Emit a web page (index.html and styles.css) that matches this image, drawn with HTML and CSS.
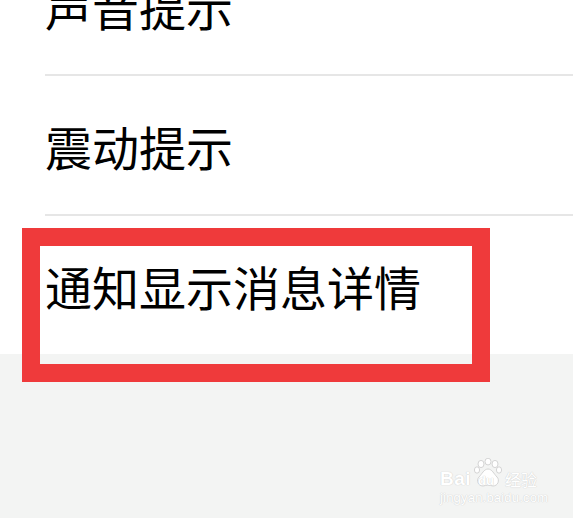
FILE: index.html
```html
<!DOCTYPE html>
<html lang="zh-CN">
<head>
    <meta charset="UTF-8">
    <meta name="viewport" content="width=device-width, initial-scale=1.0">
    <title>新消息通知</title>
    <link rel="stylesheet" href="styles.css">
</head>
<body>
    <main class="settings">
        <div class="item">声音提示</div>
        <div class="item">震动提示</div>
        <div class="item">通知显示消息详情</div>
    </main>

    <!-- 标注框 -->
    <div class="highlight"></div>

    <div class="watermark">
        <div class="wm-logo">
            <span class="wm-bai">Bai</span>
            <span class="wm-paw">
                <svg width="30" height="30" viewBox="0 0 30 30">
                    <ellipse cx="8" cy="6" rx="3" ry="3.6"/>
                    <ellipse cx="15" cy="3.6" rx="3" ry="3.4"/>
                    <ellipse cx="22" cy="6" rx="3" ry="3.6"/>
                    <ellipse cx="26" cy="12" rx="2.6" ry="3.2"/>
                    <ellipse cx="4" cy="12" rx="2.6" ry="3.2"/>
                    <path d="M15 11c-4 0-6 5-9 8-3 3-1 9 4 9 2 0 3-1 5-1s3 1 5 1c5 0 7-6 4-9-3-3-5-8-9-8z"/>
                </svg>
                <span class="wm-du">du</span>
            </span>
            <span class="wm-jy">经验</span>
        </div>
        <div class="wm-url">jingyan.baidu.com</div>
    </div>
</body>
</html>
```

FILE: styles.css
```css
body {
    margin: 0;
    padding: 0;
    background-color: #f3f4f3;
    font-family: "Noto Sans CJK SC", "Noto Sans", sans-serif;
    color: #000;
    overflow: hidden;
}

.settings {
    margin-top: -64px;
    background-color: #fff;
}

.item {
    height: 138px;
    margin-left: 45px;
    display: flex;
    align-items: center;
    font-size: 47px;
    line-height: 1;
    border-bottom: 2px solid #e6e6e6;
}

.item:last-child {
    border-bottom: none;
}

.highlight {
    position: absolute;
    left: 22px;
    top: 228px;
    width: 468px;
    height: 154px;
    box-sizing: border-box;
    border: 18px solid #ef3a3b;
}

.watermark {
    position: absolute;
    left: 440px;
    top: 458px;
    color: #fff;
    text-shadow: 0 0 1px #d0d0d0, 0 0 1px #d0d0d0;
}

.wm-logo {
    display: flex;
    align-items: flex-end;
    height: 30px;
}

.wm-bai {
    font-family: "Liberation Sans", sans-serif;
    font-weight: bold;
    font-size: 19px;
    line-height: 1;
    letter-spacing: 0.5px;
}

.wm-paw {
    position: relative;
    width: 30px;
    height: 30px;
    margin-left: 2px;
}

.wm-paw svg {
    display: block;
    fill: #fff;
    stroke: #d4d4d4;
    stroke-width: 1;
}

.wm-du {
    position: absolute;
    left: 5px;
    bottom: 1px;
    font-family: "Liberation Sans", sans-serif;
    font-weight: bold;
    font-size: 13px;
    line-height: 1;
    color: #fff;
}

.wm-jy {
    font-size: 16px;
    line-height: 1;
    margin-left: 2px;
    margin-bottom: 1px;
}

.wm-url {
    font-family: "Liberation Sans", sans-serif;
    font-size: 13px;
    line-height: 1;
    margin-top: 3px;
    letter-spacing: 0.2px;
}
```
